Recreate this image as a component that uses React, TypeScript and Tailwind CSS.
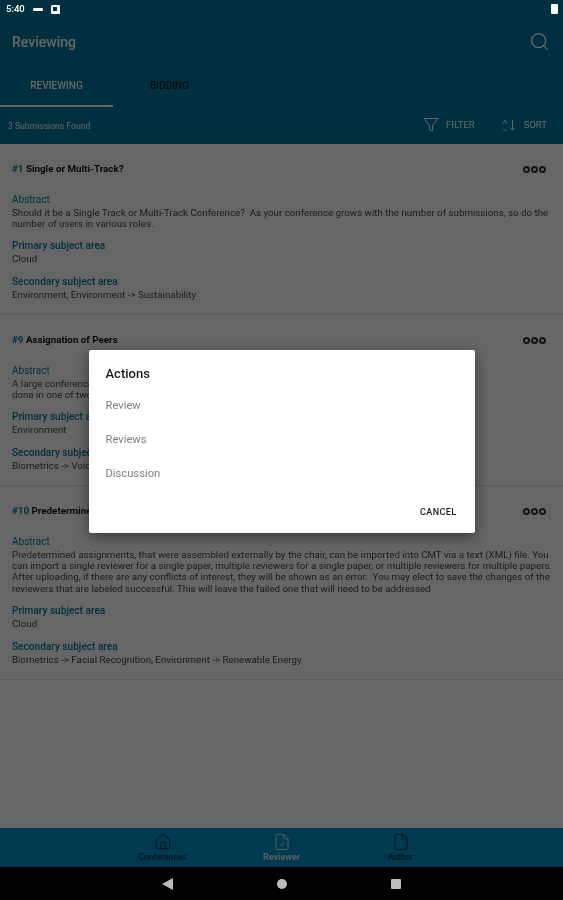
import { Search, Home, FileCheck, File } from "lucide-react";

const submissions = [
    {
        id: "#1",
        title: "Single or Multi-Track?",
        abstract: [
            "Should it be a Single Track or Multi-Track Conference?  As your conference grows with the number of submissions, so do the",
            "number of users in various roles.",
        ],
        primary: "Cloud",
        secondary: "Environment, Environment -> Sustainability",
    },
    {
        id: "#9",
        title: "Assignation of Peers",
        abstract: [
            "A large conference may have many reviewers, and the assignment of peers to submissions will need to be",
            "done in one of two ways: automatic assignment by the system or by manual assignments",
        ],
        primary: "Environment",
        secondary: "Biometrics -> Voice Recognition",
    },
    {
        id: "#10",
        title: "Predetermined Assignments",
        abstract: [
            "Predetermined assignments, that were assembled externally by the chair, can be imported into CMT via a text (XML) file. You",
            "can import a single reviewer for a single paper, multiple reviewers for a single paper, or multiple reviewers for multiple papers.",
            "After uploading, if there are any conflicts of interest, they will be shown as an error.  You may elect to save the changes of the",
            "reviewers that are labeled successful. This will leave the failed one that will need to be addressed",
        ],
        primary: "Cloud",
        secondary: "Biometrics -> Facial Recognition, Environment -> Renewable Energy",
    },
];

function Dots() {
    return (
        <div className="flex gap-[1px]">
            <span className="h-[7px] w-[7px] rounded-full border-2 border-[#333]" />
            <span className="h-[7px] w-[7px] rounded-full border-2 border-[#333]" />
            <span className="h-[7px] w-[7px] rounded-full border-2 border-[#333]" />
        </div>
    );
}

function SubmissionCard({ item }: { item: (typeof submissions)[number] }) {
    return (
        <div className="border-b border-[#e4e4e4] px-3 pb-[13px] pt-[19px]">
            <div className="flex h-[13px] items-center justify-between pr-[5px] text-[9.8px] font-bold">
                <p>
                    <span className="text-[#00789e]">{item.id}</span>{" "}
                    <span className="text-[#111]">{item.title}</span>
                </p>
                <Dots />
            </div>

            <p className="mt-[17.5px] text-[10px] leading-[12px] text-[#00789e]">Abstract</p>
            <div className="mt-[1px] text-[9.75px] leading-[11.3px] text-[#444]">
                {item.abstract.map((line) => (
                    <p key={line} className="whitespace-pre">
                        {line}
                    </p>
                ))}
            </div>

            <p className="mt-[11px] text-[10.1px] font-medium leading-[12px] text-[#00789e]">
                Primary subject area
            </p>
            <p className="mt-[1px] text-[9.75px] leading-[12px] text-[#444]">{item.primary}</p>

            <p className="mt-[11px] text-[10.1px] font-medium leading-[12px] text-[#00789e]">
                Secondary subject area
            </p>
            <p className="mt-[1px] text-[9.75px] leading-[12px] text-[#444]">{item.secondary}</p>
        </div>
    );
}

function NavTab({
    label,
    active,
    children,
}: {
    label: string;
    active?: boolean;
    children: React.ReactNode;
}) {
    return (
        <div className={`flex w-[119px] flex-col items-center ${active ? "text-[#e4e8f4]" : "text-[#0b2a3a]"}`}>
            {children}
            <span className={`mt-[1px] leading-[11px] ${active ? "text-[9px] font-bold" : "text-[8.5px] font-medium"}`}>
                {label}
            </span>
        </div>
    );
}

export default function App() {
    return (
        <div className="relative h-[900px] w-[563px] overflow-hidden bg-[#ffffff] blur-[0.6px] [font-family:Roboto,sans-serif]">
            <div className="flex h-full flex-col">
                {/* Header */}
                <header className="h-[144px] shrink-0 bg-[#00789e] text-white">
                    <div className="flex h-[59px] items-end justify-between pb-[7px] pl-3 pr-[13px]">
                        <h1 className="text-[14px] font-medium leading-[20px]">Reviewing</h1>
                        <Search size={21} strokeWidth={1.5} />
                    </div>
                    <div className="mt-[14px] flex h-[34px] text-[10px] font-medium">
                        <div className="flex w-[113px] items-start justify-center border-b-2 border-white pt-[5px]">
                            REVIEWING
                        </div>
                        <div className="flex w-[113px] items-start justify-center pt-[5px] text-[#0a1a20]">
                            BIDDING
                        </div>
                    </div>
                    <div className="flex h-[36px] items-center pl-2 pr-[16px] text-[9.5px]">
                        <span className="mt-[2px] text-[8.6px]">3 Submissions Found</span>
                        <div className="ml-auto flex items-center">
                            <svg width="16" height="16" viewBox="0 0 16 16" fill="none" stroke="currentColor" strokeWidth="1">
                                <path d="M1 1.5h14L9.5 8.5v5.5l-3-1V8.5z" />
                            </svg>
                            <span className="ml-[7px]">FILTER</span>
                        </div>
                        <div className="ml-[26px] flex items-center">
                            <svg width="16" height="12" viewBox="0 0 16 12" fill="none" stroke="currentColor" strokeWidth="1">
                                <path d="M11.5 1v10M9 8.5l2.5 2.5L14 8.5" />
                                <path d="M2 5l2-4 2 4M2 11h4" strokeWidth="0.8" />
                            </svg>
                            <span className="ml-[7px]">SORT</span>
                        </div>
                    </div>
                </header>

                {/* Submissions */}
                <main className="flex-1 bg-[#ffffff]">
                    {submissions.map((item) => (
                        <SubmissionCard key={item.id} item={item} />
                    ))}
                </main>

                {/* Bottom tabs */}
                <nav className="flex h-[39px] shrink-0 items-center justify-center bg-[#0091c8] pt-[1px]">
                    <NavTab label="Conferences">
                        <Home size={18} strokeWidth={1.2} />
                    </NavTab>
                    <NavTab label="Reviewer" active>
                        <FileCheck size={18} strokeWidth={1.2} />
                    </NavTab>
                    <NavTab label="Author">
                        <File size={18} strokeWidth={1.2} />
                    </NavTab>
                </nav>

                {/* Spacer for the Android nav bar */}
                <div className="h-[33px] shrink-0 bg-black" />
            </div>

            {/* Scrim */}
            <div className="absolute inset-x-0 bottom-[33px] top-0 flex items-start justify-center bg-black/60 pt-[350px]">
                <div className="flex h-[183px] w-[386px] flex-col rounded-[2px] bg-white pl-[17px] pr-[18px] shadow-[0_4px_14px_rgba(0,0,0,0.45)]">
                    <h2 className="mt-[15px] text-[13px] font-medium leading-[18px] text-[#1a1a1a]">Actions</h2>
                    <div className="mt-[6px] text-[11.2px] leading-[34px] text-[#808080]">
                        <p>Review</p>
                        <p>Reviews</p>
                        <p>Discussion</p>
                    </div>
                    <button className="ml-auto mt-[15px] text-[9px] font-medium tracking-[0.4px] text-[#222]">
                        CANCEL
                    </button>
                </div>
            </div>

            {/* Android nav bar */}
            <div className="absolute inset-x-0 bottom-0 flex h-[33px] items-center justify-center gap-[104px] text-[#bcbcbc]">
                <svg width="11" height="12" viewBox="0 0 11 12" fill="currentColor">
                    <path d="M11 0v12L0 6z" />
                </svg>
                <span className="h-[10px] w-[10px] rounded-full bg-[#bcbcbc]" />
                <span className="h-[10px] w-[10px] rounded-[1px] bg-[#bcbcbc]" />
            </div>

            {/* Status bar */}
            <div className="absolute left-0 right-0 top-0 flex h-[18px] items-center pl-[6px] pr-[5px] text-white">
                <span className="text-[9.5px] font-medium">5:40</span>
                <span className="ml-[8px] h-[3px] w-[10px] rounded-[1px] bg-white" />
                <span className="ml-[8px] flex h-[9px] w-[9px] items-center justify-center rounded-[1px] bg-white">
                    <span className="h-[4px] w-[4px] bg-[#00303f]" />
                </span>
                <span className="relative ml-auto h-[10px] w-[7px] rounded-[1px] bg-white" />
            </div>
        </div>
    );
}
